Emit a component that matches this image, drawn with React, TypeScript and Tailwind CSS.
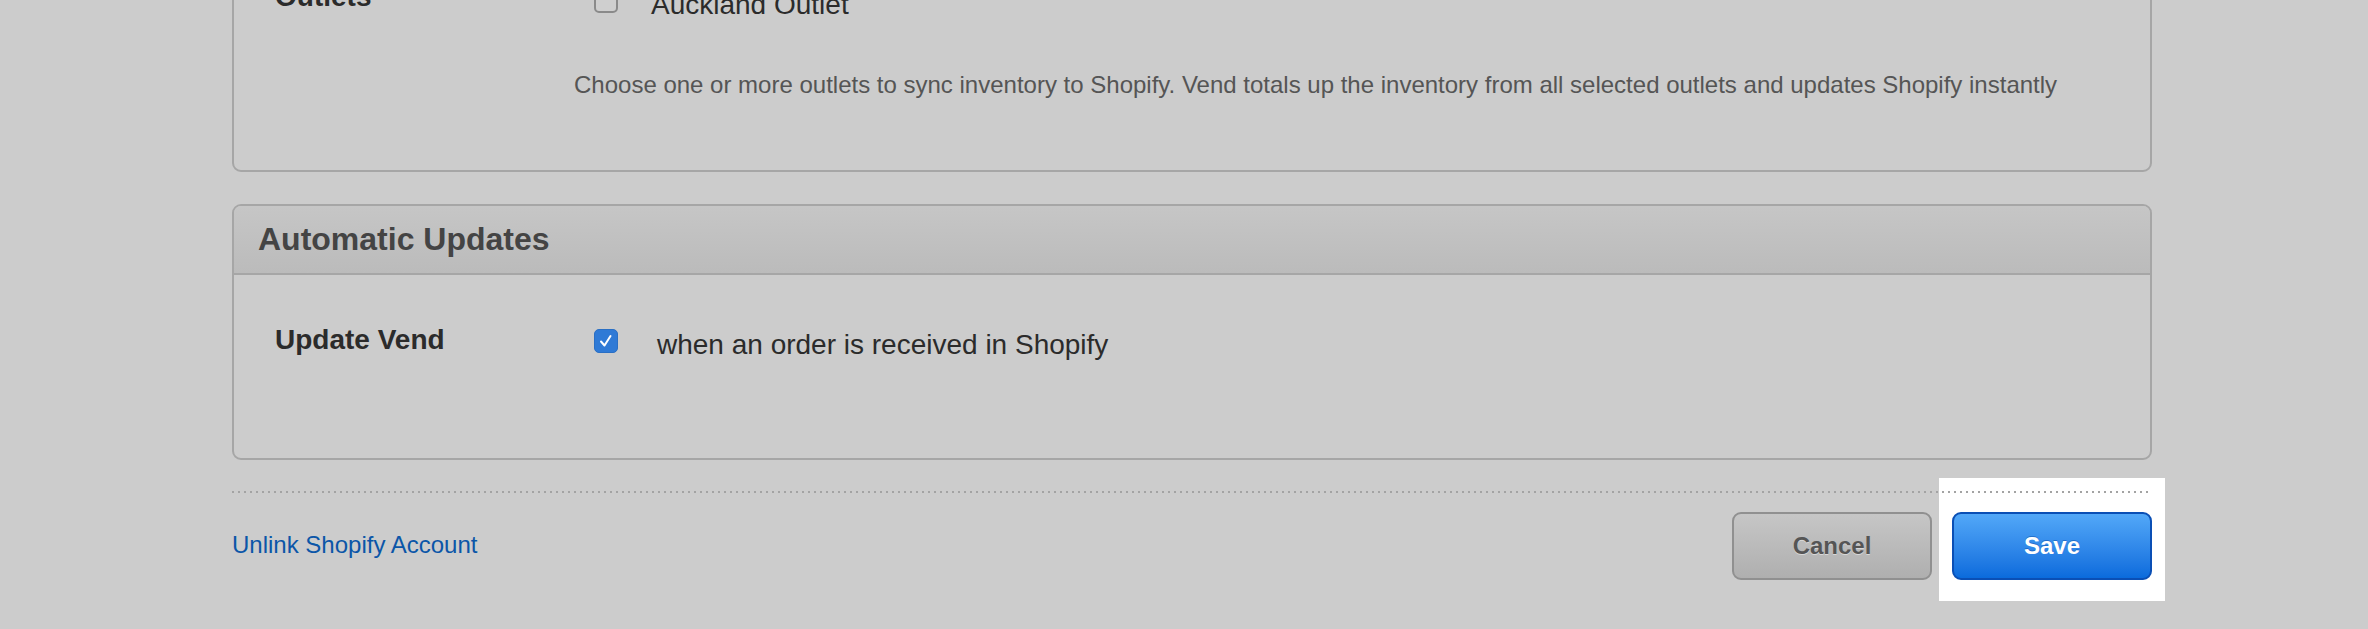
import React from 'react';

const Checkbox = ({ checked }: { checked?: boolean }) =>
  checked ? (
    <span className="flex h-[24px] w-[24px] shrink-0 items-center justify-center rounded-[5px] border border-[#2a6fc4] bg-[#2f7ad6]">
      <svg width="18" height="18" viewBox="0 0 18 18" fill="none">
        <path d="M4 9.5 L7.5 13.5 L13.5 4" stroke="#ffffff" strokeWidth="2" strokeLinecap="round" strokeLinejoin="round" />
      </svg>
    </span>
  ) : (
    <span className="block h-[24px] w-[24px] shrink-0 rounded-[5px] border-2 border-[#8a8a8a] bg-[#cfcfcf]" />
  );

export default function App() {
  return (
    <div className="h-[629px] w-[2368px] overflow-hidden bg-[#cccccc] font-['Liberation_Sans',Arial,sans-serif]">
      <div className="ml-[232px] flex w-[1920px] flex-col">
        {/* outlets panel, scrolled partly out of view */}
        <div className="-mt-[60px] rounded-[9px] border-2 border-[#a6a6a6]">
          <div className="flex pl-[41px] pt-[39px] pb-[71px]">
            <div className="w-[299px] text-[28px] font-bold leading-[32px] text-[#2b2b2b]">Outlets</div>
            <div className="mt-[8px] flex flex-col">
              <div className="ml-[20px] flex items-start">
                <Checkbox />
                <span className="ml-[33px] text-[28px] leading-[32px] text-[#2b2b2b]">Auckland Outlet</span>
              </div>
              <p className="mt-[50px] text-[24px] leading-[28px] text-[#555555]">
                Choose one or more outlets to sync inventory to Shopify. Vend totals up the inventory from all selected outlets and updates Shopify instantly
              </p>
            </div>
          </div>
        </div>

        {/* automatic updates panel */}
        <div className="mt-[32px] overflow-hidden rounded-[9px] border-2 border-[#a6a6a6]">
          <div className="flex h-[69px] items-center border-b-2 border-[#a6a6a6] bg-gradient-to-b from-[#c6c6c6] to-[#bbbbbb] pl-[24px]">
            <h2 className="-mt-[2px] text-[32px] font-bold leading-[36px] text-[#444444]">Automatic Updates</h2>
          </div>
          <div className="flex pl-[41px] pt-[49px] pb-[97px]">
            <div className="w-[299px] text-[28px] font-bold leading-[32px] text-[#2b2b2b]">Update Vend</div>
            <div className="mt-[5px] ml-[20px] flex items-start">
              <Checkbox checked />
              <span className="ml-[39px] text-[28px] leading-[32px] text-[#2b2b2b]">when an order is received in Shopify</span>
            </div>
          </div>
        </div>

        {/* footer */}
        <div className="relative z-10 mt-[31px] h-[2px] w-full bg-[repeating-linear-gradient(to_right,#a3a3a3_0px,#a3a3a3_2px,transparent_2px,transparent_6px)]" />
        <div className="mt-[19px] flex items-center justify-between">
          <a href="#" className="-mt-[2px] text-[24px] leading-[28px] text-[#0b56a8]">Unlink Shopify Account</a>
          <div className="flex gap-[20px]">
            <button className="h-[68px] w-[200px] rounded-[9px] border-2 border-[#909090] bg-gradient-to-b from-[#c6c6c6] to-[#afafaf] text-[24px] font-bold text-[#555555] [text-shadow:0_1px_0_#d8d8d8]">
              Cancel
            </button>
            <div className="relative">
              <div className="absolute -top-[34px] -bottom-[21px] -left-[13px] -right-[13px] bg-white" />
              <button className="relative h-[68px] w-[200px] rounded-[9px] border-2 border-[#0a4fb5] bg-gradient-to-b from-[#52a8f8] to-[#0a6bdc] text-[24px] font-bold text-white [text-shadow:0_-1px_0_rgba(0,60,150,0.4)]">
                Save
              </button>
            </div>
          </div>
        </div>
      </div>
    </div>
  );
}
